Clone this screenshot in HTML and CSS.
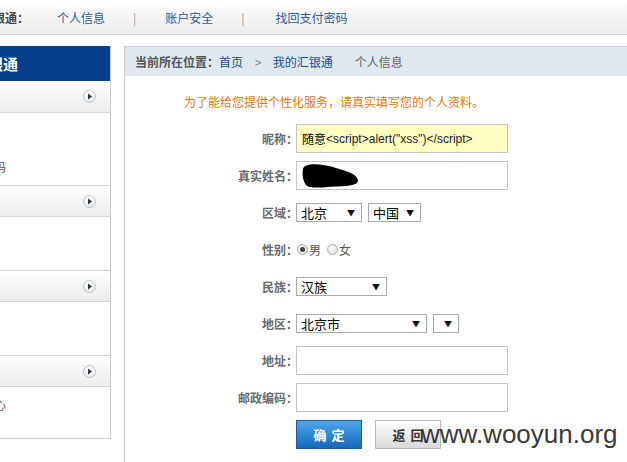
FILE: index.html
```html
<!DOCTYPE html>
<html lang="zh-CN">
<head>
<meta charset="utf-8">
<title>个人信息</title>
<link rel="stylesheet" href="styles.css">
</head>
<body>
<div class="topbar">
  <span class="top-label">我的汇银通：</span>
  <a class="top-link">个人信息</a>
  <span class="top-sep">|</span>
  <a class="top-link top-link-2">账户安全</a>
  <span class="top-sep">|</span>
  <a class="top-link top-link-3">找回支付密码</a>
</div>

<div class="layout">
  <aside class="sidebar">
    <div class="side-title">我的汇银通</div>
    <div class="side-head"><span class="side-head-text">账户信息</span><span class="circle-btn"><svg width="6" height="7" viewBox="0 0 6 7"><path d="M1 0.5 L5 3.5 L1 6.5 Z" fill="#333"/></svg></span></div>
    <ul class="side-list side-list-1">
      <li>个人信息</li>
      <li>找回支付密码</li>
    </ul>
    <div class="side-head side-head-b"><span class="side-head-text">交易管理</span><span class="circle-btn"><svg width="6" height="7" viewBox="0 0 6 7"><path d="M1 0.5 L5 3.5 L1 6.5 Z" fill="#333"/></svg></span></div>
    <ul class="side-list side-list-2">
      <li>交易记录</li>
    </ul>
    <div class="side-head side-head-b"><span class="side-head-text">资金管理</span><span class="circle-btn"><svg width="6" height="7" viewBox="0 0 6 7"><path d="M1 0.5 L5 3.5 L1 6.5 Z" fill="#333"/></svg></span></div>
    <ul class="side-list side-list-3">
      <li>充值提现</li>
    </ul>
    <div class="side-head side-head-b"><span class="side-head-text">消息中心</span><span class="circle-btn"><svg width="6" height="7" viewBox="0 0 6 7"><path d="M1 0.5 L5 3.5 L1 6.5 Z" fill="#333"/></svg></span></div>
    <ul class="side-list side-list-4">
      <li>我的消息中心</li>
    </ul>
  </aside>

  <main class="main">
    <div class="crumbs">
      <span class="bc-title">当前所在位置：</span><a class="bc-link bc-home">首页</a><span class="bc-sep">&gt;</span><a class="bc-link">我的汇银通</a><span class="bc-cur">个人信息</span>
    </div>
    <p class="notice">为了能给您提供个性化服务，请真实填写您的个人资料。</p>
    <div class="form">
      <label class="f-label">昵称：</label>
      <div class="f-field"><div class="text-input text-input-hl"><span class="cjk">随意</span><span class="latin">&lt;script&gt;alert("xss")&lt;/script&gt;</span></div></div>

      <label class="f-label">真实姓名：</label>
      <div class="f-field"><div class="text-input"><svg class="blob" width="62" height="26" viewBox="0 0 62 26"><path d="M3 6 C4 0 20 0 36 5 C46 8 58 11 58 18 C57 24 40 23 28 24 C18 25 9 25 6 22 C3 18 2 12 3 6 Z" fill="#000"/></svg></div></div>

      <label class="f-label">区域：</label>
      <div class="f-field">
        <div class="select w-66"><span class="sel-text">北京</span><span class="sel-arrow">▼</span></div>
        <div class="select w-53"><span class="sel-text">中国</span><span class="sel-arrow">▼</span></div>
      </div>

      <label class="f-label">性别：</label>
      <div class="f-field radios">
        <span class="radio radio-on"></span><span class="radio-text">男</span>
        <span class="radio"></span><span class="radio-text">女</span>
      </div>

      <label class="f-label">民族：</label>
      <div class="f-field">
        <div class="select w-91"><span class="sel-text">汉族</span><span class="sel-arrow">▼</span></div>
      </div>

      <label class="f-label">地区：</label>
      <div class="f-field">
        <div class="select w-131"><span class="sel-text">北京市</span><span class="sel-arrow">▼</span></div>
        <div class="select w-26"><span class="sel-text"></span><span class="sel-arrow">▼</span></div>
      </div>

      <label class="f-label">地址：</label>
      <div class="f-field"><div class="text-input"></div></div>

      <label class="f-label">邮政编码：</label>
      <div class="f-field"><div class="text-input"></div></div>

      <div class="f-label"></div>
      <div class="f-buttons">
        <button class="btn btn-ok">确定</button>
        <button class="btn btn-back">返回</button>
      </div>
    </div>
  </main>
</div>

<div class="watermark">www.wooyun.org</div>
</body>
</html>
```

FILE: styles.css
```css
html, body {
  margin: 0;
  padding: 0;
  width: 627px;
  height: 462px;
  overflow: hidden;
  background: #fff;
}
body {
  font-family: "Noto Sans CJK SC", "Liberation Sans", sans-serif;
  font-size: 12px;
  color: #333;
  position: relative;
}

.topbar {
  height: 34px;
  border-bottom: 1px solid #d4d4d4;
  background: linear-gradient(#ffffff, #ececec);
  display: flex;
  align-items: center;
  gap: 28px;
  white-space: nowrap;
}
.top-label {
  margin-left: -43px;
  font-weight: bold;
  color: #444;
}
.top-link {
  color: #2a5c98;
}
.top-link-2 {
  margin-left: 1px;
}
.top-link-3 {
  margin-left: 3px;
}
.top-sep {
  color: #999;
}

.layout {
  display: flex;
  margin-top: 11px;
  align-items: flex-start;
}

.sidebar {
  flex: none;
  width: 204px;
  margin-left: -95px;
  border-left: 1px solid #ccc;
  border-right: 1px solid #ccc;
  border-bottom: 1px solid #ccc;
  white-space: nowrap;
}
.side-title {
  height: 35px;
  line-height: 35px;
  background: #033f8a;
  color: #fff;
  font-weight: bold;
  font-size: 15px;
  padding-left: 37px;
}
.side-head {
  height: 31px;
  border-bottom: 1px solid #d4d4d4;
  background: linear-gradient(#ffffff, #ececec);
  display: flex;
  align-items: center;
  justify-content: space-between;
  padding: 0 14px 0 28px;
  color: #333;
  font-weight: bold;
}
.side-head-b {
  height: 30px;
  border-top: 1px solid #d4d4d4;
}
.side-head-text {
  color: #333;
}
.circle-btn {
  width: 11px;
  height: 11px;
  border: 1px solid #b8c2cc;
  border-radius: 50%;
  background: linear-gradient(#ffffff, #e6eaee);
  display: flex;
  align-items: center;
  justify-content: center;
}
.circle-btn svg {
  margin-left: 1px;
}
.side-list {
  list-style: none;
  margin: 0;
  padding: 0 0 0 28px;
  color: #555;
}
.side-list li {
  height: 36px;
  line-height: 36px;
}
.side-list-1 { height: 72px; }
.side-list-2 { height: 53px; }
.side-list-3 { height: 53px; }
.side-list-4 { height: 51px; }

.main {
  flex: none;
  width: 540px;
  height: 430px;
  margin-left: 13px;
  border-top: 1px solid #cdd3d9;
  border-left: 1px solid #ccc;
}
.crumbs {
  height: 29px;
  line-height: 29px;
  background: #dfe7ef;
  padding-left: 10px;
  white-space: nowrap;
}
.bc-title {
  font-weight: bold;
  color: #555;
}
.bc-link {
  color: #1e4f8c;
}
.bc-home {
  margin-right: 12px;
}
.bc-sep {
  color: #888;
  margin-right: 11px;
}
.bc-cur {
  color: #666;
  margin-left: 22px;
}

.notice {
  margin: 16px 0 8px;
  padding-left: 59px;
  line-height: 20px;
  color: #e0770f;
  white-space: nowrap;
}

.form {
  display: grid;
  grid-template-columns: 171px 1fr;
  grid-auto-rows: 37px;
  align-items: center;
}
.f-label {
  text-align: right;
  font-weight: bold;
  color: #6a6a6a;
  margin-right: -2px;
}
.f-field {
  display: flex;
  align-items: center;
  gap: 6px;
}
.text-input {
  box-sizing: border-box;
  width: 212px;
  height: 29px;
  border: 1px solid #c4c4c4;
  background: #fff;
  display: flex;
  align-items: center;
  padding-left: 5px;
  white-space: nowrap;
  overflow: hidden;
}
.text-input-hl {
  background: #ffffc2;
}
.cjk {
  color: #000;
  font-size: 12px;
}
.latin {
  font-family: "Liberation Sans", Arial, sans-serif;
  font-size: 12px;
  color: #222;
}
.blob {
  margin-left: -2px;
}

.select {
  box-sizing: border-box;
  height: 19px;
  border: 1px solid #a9a9a9;
  background: #fff;
  display: flex;
  align-items: center;
  justify-content: space-between;
  padding: 0 6px 0 4px;
  color: #000;
  font-size: 13px;
}
.sel-arrow {
  font-size: 8px;
  color: #111;
}
.w-66 { width: 66px; }
.w-53 { width: 53px; }
.w-91 { width: 91px; }
.w-131 { width: 131px; }
.w-26 { width: 26px; padding: 0 6px; }

.radios {
  gap: 0;
}
.radio {
  box-sizing: border-box;
  width: 11px;
  height: 11px;
  border-radius: 50%;
  border: 1px solid #a8a8a8;
  background: radial-gradient(circle at 40% 35%, #ffffff, #d8d8d8);
  margin-right: 1px;
  margin-left: 1px;
  position: relative;
}
.radio-on::after {
  content: "";
  position: absolute;
  left: 2px;
  top: 2px;
  width: 5px;
  height: 5px;
  border-radius: 50%;
  background: #444;
}
.radio-text {
  color: #555;
  margin-right: 5px;
}

.f-buttons {
  display: flex;
  gap: 13px;
  align-self: start;
  margin-top: 4px;
}
.btn {
  box-sizing: border-box;
  width: 66px;
  height: 29px;
  font-family: "Noto Sans CJK SC", sans-serif;
  font-size: 13px;
  font-weight: bold;
  letter-spacing: 5px;
  padding: 0 0 0 5px;
  cursor: pointer;
}
.btn-ok {
  color: #fff;
  border: 1px solid #1d5fa6;
  background: linear-gradient(#4ea6ea, #1668bb);
}
.btn-back {
  color: #333;
  border: 1px solid #b8b8b8;
  background: linear-gradient(#ffffff, #d9d9d9);
}

.watermark {
  position: absolute;
  left: 421px;
  top: 414px;
  font-family: "Liberation Sans", Arial, sans-serif;
  font-size: 26px;
  color: #3a3a3a;
  line-height: 40px;
  white-space: nowrap;
}
```
